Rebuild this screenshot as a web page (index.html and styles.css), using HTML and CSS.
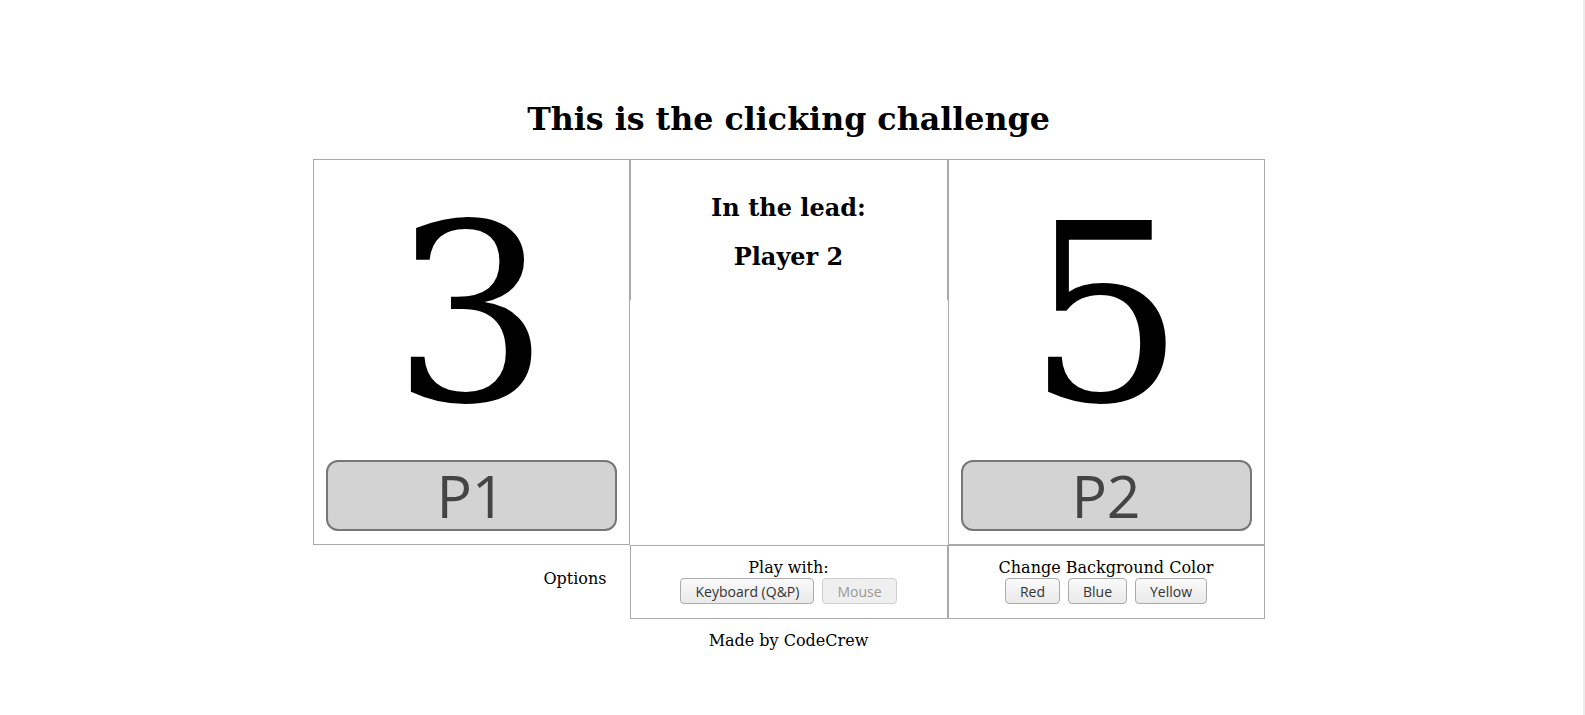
FILE: index.html
```html
<!DOCTYPE html>
<html lang="en">
<head>
<meta charset="utf-8">
<title>Clicking challenge</title>
<link rel="stylesheet" href="styles.css">
</head>
<body>
<h1 class="title">This is the clicking challenge</h1>
<div class="board">
  <div class="row">
    <div class="player">
      <div class="score">3</div>
      <button class="pbtn">P1</button>
    </div>
    <div class="lead">
      <h2>In the lead:</h2>
      <h2>Player 2</h2>
    </div>
    <div class="player">
      <div class="score">5</div>
      <button class="pbtn">P2</button>
    </div>
  </div>
  <div class="row">
    <div class="options">Options</div>
    <div class="optbox mid">
      <div class="label">Play with:</div>
      <div class="btns"><button class="sbtn">Keyboard (Q&amp;P)</button><button class="sbtn" disabled>Mouse</button></div>
    </div>
    <div class="optbox">
      <div class="label">Change Background Color</div>
      <div class="btns"><button class="sbtn">Red</button><button class="sbtn">Blue</button><button class="sbtn">Yellow</button></div>
    </div>
  </div>
</div>
<p class="footer">Made by CodeCrew</p>
<div class="edge"></div>
</body>
</html>
```
FILE: styles.css
```css
html, body {
  background: #fff;
}
body {
  margin: 0;
  padding: 0 16px 0 8px;
  font-family: "DejaVu Serif", serif;
  font-size: 16px;
  color: #000;
}
.title {
  margin: 100px 0 22px;
  font-size: 31.7px;
  font-weight: bold;
  text-align: center;
  line-height: 37px;
}
.board {
  width: 952px;
  margin: 0 auto;
}
.row {
  display: flex;
}
.player {
  box-sizing: border-box;
  width: 317px;
  height: 386px;
  border: 1px solid #aaa;
  display: flex;
  flex-direction: column;
}
.score {
  font-size: 248px;
  line-height: 287px;
  margin-top: 12px;
  text-align: center;
}
.pbtn {
  box-sizing: border-box;
  flex-shrink: 0;
  margin: auto 12px 13px;
  height: 71px;
  background: #d3d3d3;
  border: 2px solid #777;
  border-radius: 12px;
  font-family: "Open Sans", sans-serif;
  font-size: 59px;
  line-height: 1;
  color: #444;
  padding: 0;
}
.lead {
  box-sizing: border-box;
  width: 318px;
  height: 141px;
  padding-top: 13px;
  border: 1px solid #aaa;
  border-bottom: none;
  text-align: center;
}
.lead h2 {
  font-size: 24px;
  margin: 20px 0;
  line-height: normal;
}
.options {
  box-sizing: border-box;
  width: 317px;
  height: 74px;
  padding: 24px 23px 0 0;
  text-align: right;
}
.optbox {
  box-sizing: border-box;
  width: 317px;
  height: 74px;
  border: 1px solid #aaa;
  display: flex;
  flex-direction: column;
  justify-content: center;
  align-items: center;
}
.optbox.mid {
  width: 318px;
}
.label {
  line-height: normal;
  margin-top: -2px;
}
.btns {
  display: flex;
  gap: 8px;
  margin-top: 1px;
}
.sbtn {
  box-sizing: border-box;
  height: 26px;
  padding: 0 14px;
  font-family: "Open Sans", sans-serif;
  font-size: 14px;
  color: #333;
  background: linear-gradient(#fafafa, #e9e9e9);
  border: 1px solid #ababab;
  border-radius: 4px;
}
.sbtn:disabled {
  color: #999;
  background: #efefef;
  border-color: #cfcfcf;
}
.footer {
  margin: 12px 0 0;
  text-align: center;
  line-height: normal;
}
.edge {
  position: fixed;
  top: 0;
  right: 0;
  width: 2px;
  height: 100%;
  background: #ececec;
}
```
